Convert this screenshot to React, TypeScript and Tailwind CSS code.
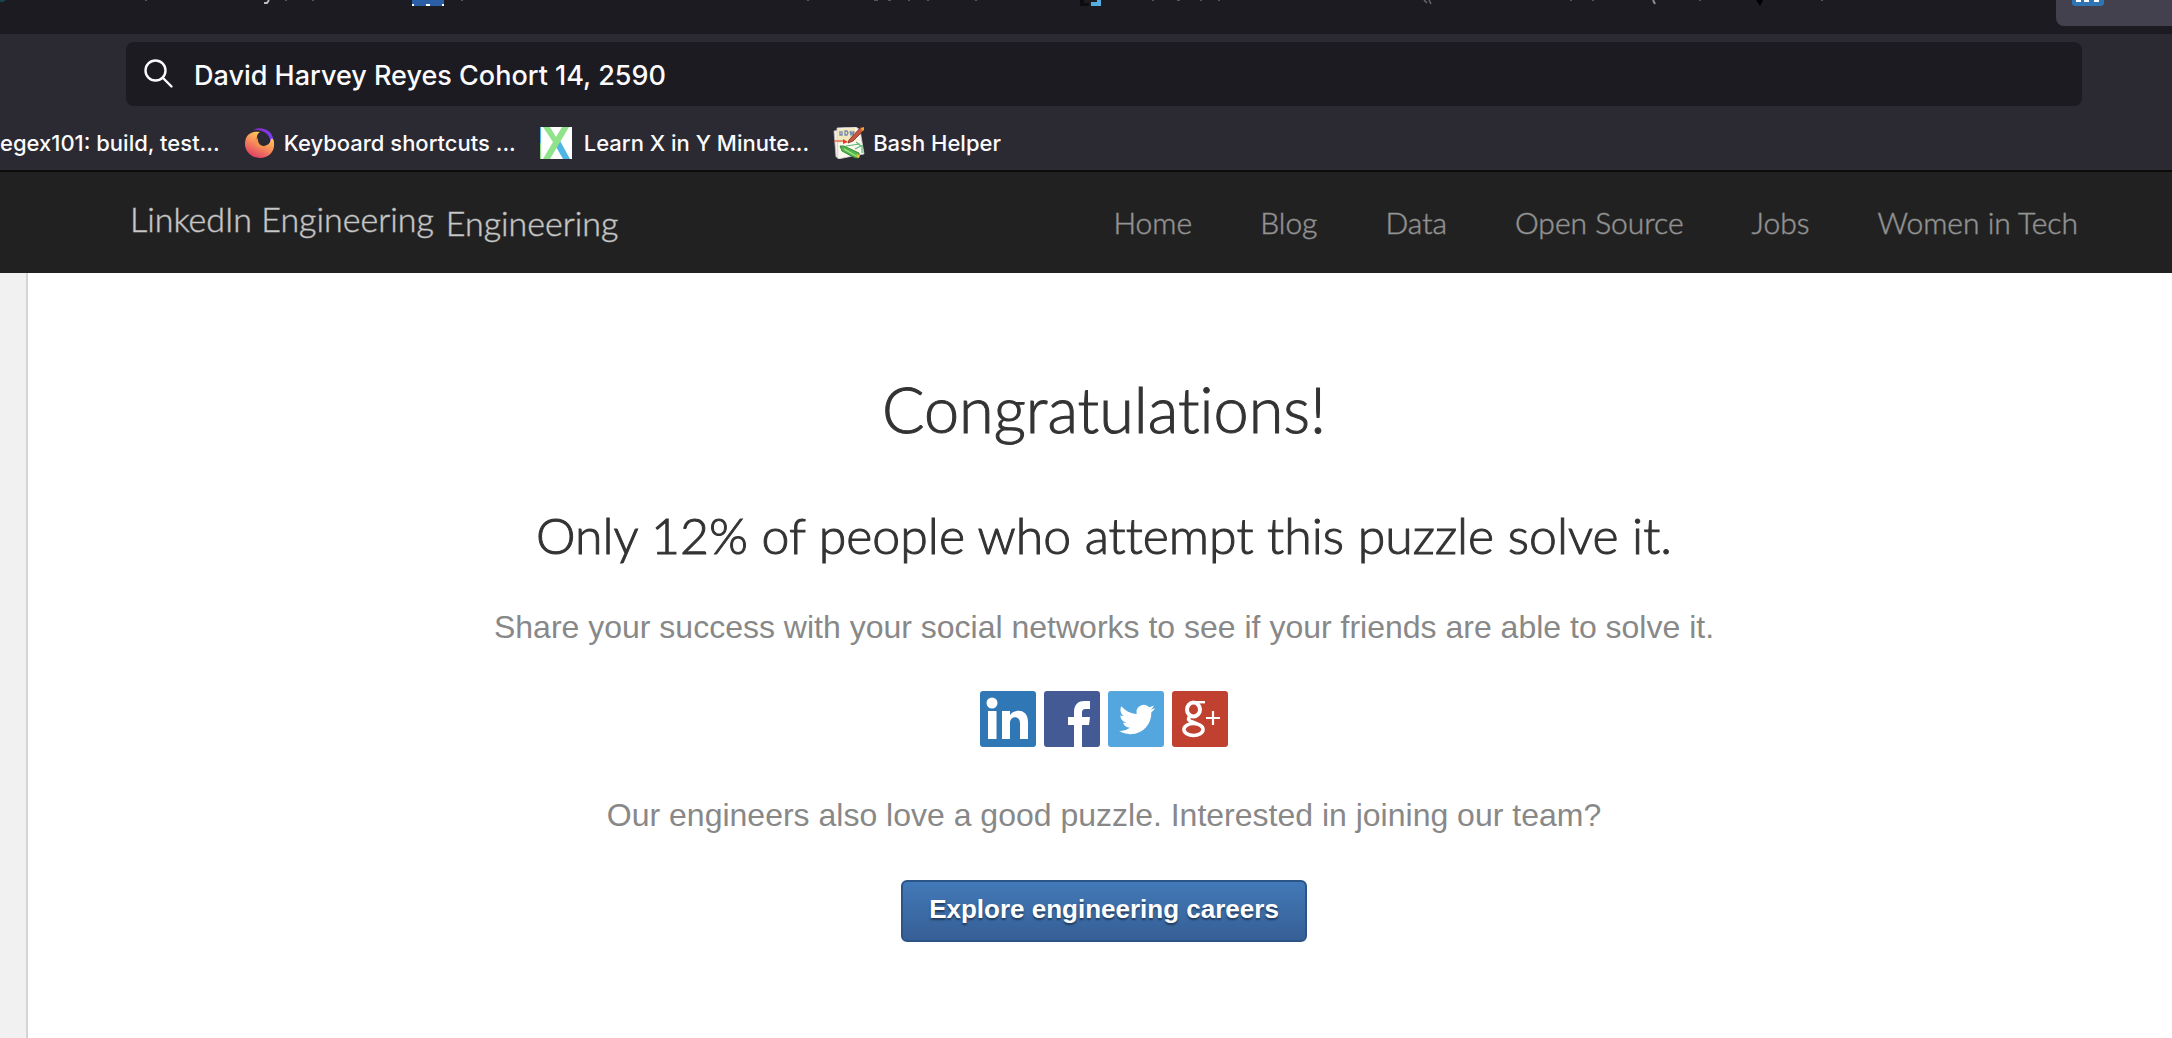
const ui = "font-['Inter',sans-serif]";
const display = "font-['Lato',sans-serif] [font-variant-ligatures:none]";
const body = "font-['Liberation_Sans',Arial,sans-serif]";
const heading = "font-light text-[#333] [-webkit-text-stroke:1px_#333]";

function SearchIcon() {
  return (
    <svg viewBox="0 0 30 30" className="size-[30px] shrink-0" fill="none" stroke="#fbfbfe" strokeWidth="2.4" strokeLinecap="round" aria-hidden="true">
      <circle cx="11.5" cy="11.5" r="10" />
      <path d="M19 19l8.500 8.500" />
    </svg>
  );
}

function FirefoxIcon() {
  return (
    <svg viewBox="0 0 32 32" className="size-8 shrink-0" aria-hidden="true">
      <defs>
        <linearGradient id="flame" x1="0.8" y1="0.1" x2="0.3" y2="1">
          <stop offset="0" stopColor="#ffd65a" />
          <stop offset="0.45" stopColor="#f9925a" />
          <stop offset="1" stopColor="#e03c66" />
        </linearGradient>
        <linearGradient id="tail" x1="0" y1="0" x2="1" y2="1">
          <stop offset="0" stopColor="#8d2bc8" />
          <stop offset="0.6" stopColor="#7a3bea" />
          <stop offset="1" stopColor="#5b62f5" />
        </linearGradient>
      </defs>
      <path d="M9 3C16-1 27 2 29 11c1 5 0 8-2 11l-1-10C24 6 16 2 9 3z" fill="url(#tail)" />
      <path d="M4 8C7 5 11 4 16 5c-2 1-3 3-3 5-3 5 0 9 5 9 5 0 8-2 9-7 2-1 3 1 3 4 1 9-6 15-14 15C7 31 1 24 1 17c0-4 1-7 3-9z" fill="url(#flame)" />
      <path d="M15 9c-4 5-2 10 3 10 4 0 7-3 7-7s-3-7-8-7c-1 1-2 2-2 4z" fill="#2b2a33" />
      <path d="M13 10l-2 4 1 4c3 4 8 4 11 1-5 1-9-2-9-6z" fill="#f6924f" />
    </svg>
  );
}

function LearnXIcon() {
  return (
    <svg viewBox="0 0 32 32" className="size-8 shrink-0" aria-hidden="true">
      <path d="M0 0h32v32H0z" fill="#fff" />
      <path d="M0 0h1v16H0z" fill="#4fb5e5" />
      <path d="M0 16h1v16H0z" fill="#8fe388" />
      <path d="M15 14l4-2 11 20h-7l-8-14z" fill="#4fb5e5" />
      <path d="M3 0h7l6 10 6-10h7L10 32H3l10-17z" fill="#8fe388" />
    </svg>
  );
}

function BashHelperIcon() {
  return (
    <svg viewBox="0 0 32 32" className="size-8 shrink-0" aria-hidden="true">
      <path d="M1 4l5-1 1 28-4-1z" fill="#f4f0e4" stroke="#bbb" strokeWidth="0.8" />
      <path d="M4 1l19-1 4 3 4 24-6 1-20 4z" fill="#fbf8ee" stroke="#ccc" strokeWidth="0.8" />
      <path d="M5 2l17-1 1 13-18 2z" fill="#f3e9bd" />
      <path d="M7 4v4h2V4m3 0h2l1 2-1 2h-2zm5 0l1 4 1-3 1 3 1-4" fill="none" stroke="#7389b0" strokeWidth="1.3" />
      <path d="M1 14h9" stroke="#e0533c" strokeWidth="1.2" />
      <path d="M10 12l5 3-5 2z" fill="#e8392c" />
      <path d="M13 19l14-2m-4-2l5 4-6 3m7-4v8" fill="none" stroke="#58b878" strokeWidth="1.2" />
      <path d="M16 13L28 0l3 3-11 11-5 2z" fill="#c9573f" stroke="#7c2b1c" strokeWidth="0.8" />
      <path d="M28 1l3-1v3l-2 1z" fill="#e6a63a" />
      <path d="M7 19l4 0 15 7v5l-4 0L9 24z" fill="#52b847" stroke="#227426" strokeWidth="0.8" />
      <path d="M11 22l12 7" stroke="#a4e58f" strokeWidth="1.4" />
      <path d="M24 27l3 1-1 3-3-1z" fill="#e3c34b" />
    </svg>
  );
}

const bookmarks = [
  { label: "Keyboard shortcuts ...", icon: <FirefoxIcon />, gap: "gap-2" },
  { label: "Learn X in Y Minute...", icon: <LearnXIcon />, gap: "gap-3" },
  { label: "Bash Helper", icon: <BashHelperIcon />, gap: "gap-2" },
];

function TabStrip() {
  return (
    <div className="flex h-[34px] items-start justify-between bg-[#1c1b22]">
      <svg viewBox="0 0 1900 8" className="h-2 w-[1900px] shrink-0" aria-hidden="true">
        <path d="M0 0h6l-3 2H0z" fill="#17434b" />
        <path d="M269 0l-2 3h-3" fill="none" stroke="#b9b9bd" strokeWidth="2" />
        <path d="M412 0h32v6h-32z" fill="#2a5ea5" />
        <path d="M412 4h2v2h-2zm14 0h4v2h-4zm16 0h2v2h-2z" fill="#fff" />
        <path d="M1080 0h4v3h5v3h-9z" fill="#0d0d10" />
        <path d="M1099 0v4h-8" fill="none" stroke="#56ade0" strokeWidth="4" />
        <path d="M1424 0l3 3m2-3l2 4" stroke="#66666c" strokeWidth="1.5" />
        <path d="M1653 0l2 4" stroke="#8f8f95" strokeWidth="2" />
        <path d="M1756 0h7l-3 6z" fill="#000" />
        <path d="M145 .5h2m138 0h2m25 0h2m147 0h2m344 0h2m65 0h4m10 0h3m17 0h2m17 0h2m46 0h2m175 0h2m23 0h3m20 0h2m16 0h2m350 0h2m20 0h2m105 0h2m120 0h2" stroke="#55555b" />
      </svg>
      <div className="h-[26px] w-[116px] shrink-0 rounded-bl-lg bg-[#42414d] pl-4">
        <svg viewBox="0 0 32 6" className="h-1.5 w-8" aria-hidden="true">
          <path d="M0 0h32v4l-2 2H2L0 4z" fill="#2f74b3" />
          <path d="M4 0h5v2H4zm8 0h5v2h-5zm10 0h5v2h-5z" fill="#fff" />
        </svg>
      </div>
    </div>
  );
}

function BrowserChrome() {
  return (
    <div className={`${ui} border-b-2 border-[#0c0c0d] bg-[#2b2a33] font-medium text-[#fbfbfe]`}>
      <TabStrip />
      <div className="mt-2 mr-[90px] ml-[126px] flex h-16 items-center gap-5 rounded-lg bg-[#1c1b22] pl-[18px]">
        <SearchIcon />
        <input
          aria-label="Search or enter address"
          defaultValue="David Harvey Reyes Cohort 14, 2590"
          className="h-full min-w-0 flex-1 bg-transparent pt-[3px] text-[27px] outline-none"
        />
      </div>
      <nav aria-label="Bookmarks" className="flex h-16 items-center gap-6 pt-[10px] text-[22px] whitespace-nowrap">
        <a href="#regex101">egex101: build, test...</a>
        {bookmarks.map((b) => (
          <a key={b.label} href="#bookmark" className={`flex items-center ${b.gap}`}>
            {b.icon}
            {b.label}
          </a>
        ))}
      </nav>
    </div>
  );
}

const navLinks = ["Home", "Blog", "Data", "Open Source", "Jobs", "Women in Tech"];

function SiteHeader() {
  return (
    <header className={`${display} flex h-[101px] items-center justify-between bg-[#212121] pr-[94px] pl-[130px] whitespace-nowrap`}>
      <a href="#top" className="flex gap-3 pb-1 text-[34px] font-light text-[#c8c8c8] [-webkit-text-stroke:1px_#c8c8c880]">
        <span className="pb-1">LinkedIn Engineering</span>
        <span className="pt-1">Engineering</span>
      </a>
      <nav aria-label="Main" className="flex gap-[68px] text-[30px] font-light text-[#949494] [-webkit-text-stroke:1px_#94949480]">
        {navLinks.map((label) => (
          <a key={label} href="#section">{label}</a>
        ))}
      </nav>
    </header>
  );
}

function LinkedInTile() {
  return (
    <svg viewBox="0 0 56 56" className="size-14" aria-hidden="true">
      <rect width="56" height="56" rx="3" fill="#3077b5" />
      <circle cx="12" cy="12" r="5.500" fill="#fff" />
      <path d="M8 20h8.500v28H8zM22 20h8v4c4-6 18-7 18 7v17h-8V32c0-8-10-7-10 0v16h-8z" fill="#fff" />
    </svg>
  );
}

function FacebookTile() {
  return (
    <svg viewBox="0 0 56 56" className="size-14" aria-hidden="true">
      <rect width="56" height="56" rx="3" fill="#435a94" />
      <path d="M30 56V34h-6v-8h6v-5c0-8 5-11 10-11h6v8h-4c-3 0-4 1-4 4v4h8l-1 8h-7v22z" fill="#fff" />
    </svg>
  );
}

function TwitterTile() {
  return (
    <svg viewBox="0 0 56 56" className="size-14" aria-hidden="true">
      <rect width="56" height="56" rx="3" fill="#54a7de" />
      <path transform="translate(11 10.500) scale(1.5)" d="M23.950 4.570a10 10 0 0 1-2.820.770 4.960 4.960 0 0 0 2.160-2.720c-.950.550-2 .950-3.130 1.180a4.920 4.920 0 0 0-8.380 4.480C7.690 8.090 4.070 6.130 1.640 3.160a4.820 4.820 0 0 0-.670 2.470c0 1.710.870 3.210 2.190 4.100a4.900 4.900 0 0 1-2.230-.620v.060a4.920 4.920 0 0 0 3.950 4.830 5 5 0 0 1-2.210.080 4.940 4.940 0 0 0 4.600 3.420A9.870 9.870 0 0 1 0 19.540a14 14 0 0 0 7.550 2.210c9.050 0 14-7.500 14-13.980 0-.210 0-.420-.020-.630a9.940 9.940 0 0 0 2.460-2.550z" fill="#fff" />
    </svg>
  );
}

function GooglePlusTile() {
  return (
    <svg viewBox="0 0 56 56" className="size-14" aria-hidden="true">
      <rect width="56" height="56" rx="3" fill="#c04130" />
      <g fill="none" stroke="#fff">
        <ellipse cx="21.500" cy="18.500" rx="6.500" ry="7" strokeWidth="4" />
        <path d="M23 11.200h10" strokeWidth="2.400" />
        <path d="M18 25c-4 5 1 5 7 8" strokeWidth="3.600" />
        <ellipse cx="21.500" cy="38.500" rx="9.500" ry="6" strokeWidth="3.600" />
        <path d="M34 27h14M41 20v14" strokeWidth="2.200" />
      </g>
    </svg>
  );
}

const shares = [
  { label: "Share on LinkedIn", icon: <LinkedInTile /> },
  { label: "Share on Facebook", icon: <FacebookTile /> },
  { label: "Share on Twitter", icon: <TwitterTile /> },
  { label: "Share on Google+", icon: <GooglePlusTile /> },
];

export default function App() {
  return (
    <div className="flex min-h-screen flex-col overflow-x-hidden bg-white">
      <BrowserChrome />
      <SiteHeader />
      <div className="flex flex-1">
        <div className="w-7 shrink-0 border-r-2 border-[#d4d4d4] bg-[#f1f1f1]" />
        <main className={`${body} flex flex-1 flex-col items-center pt-24 pl-2 text-center text-[#888]`}>
          <h1 className={`${display} ${heading} text-[63px] leading-[80px]`}>Congratulations!</h1>
          <h2 className={`${display} ${heading} mt-14 text-[50px] leading-[60px]`}>
            Only 12% of people who attempt this puzzle solve it.
          </h2>
          <p className="mt-[42px] text-[32px] leading-[40px]">
            Share your success with your social networks to see if your friends are able to solve it.
          </p>
          <div className="mt-11 flex gap-2">
            {shares.map((s) => (
              <a key={s.label} href="#share" aria-label={s.label}>{s.icon}</a>
            ))}
          </div>
          <p className="mt-12 text-[32px] leading-[40px]">
            Our engineers also love a good puzzle. Interested in joining our team?
          </p>
          <button
            type="button"
            className="mt-[45px] h-[62px] rounded-md border-2 border-[#2b5586] bg-linear-to-b from-[#4279b8] to-[#365f95] px-[26px] pb-1 text-[26px] font-bold text-white [text-shadow:0_2px_2px_rgba(0,0,0,0.45)]"
          >
            Explore engineering careers
          </button>
        </main>
      </div>
    </div>
  );
}
